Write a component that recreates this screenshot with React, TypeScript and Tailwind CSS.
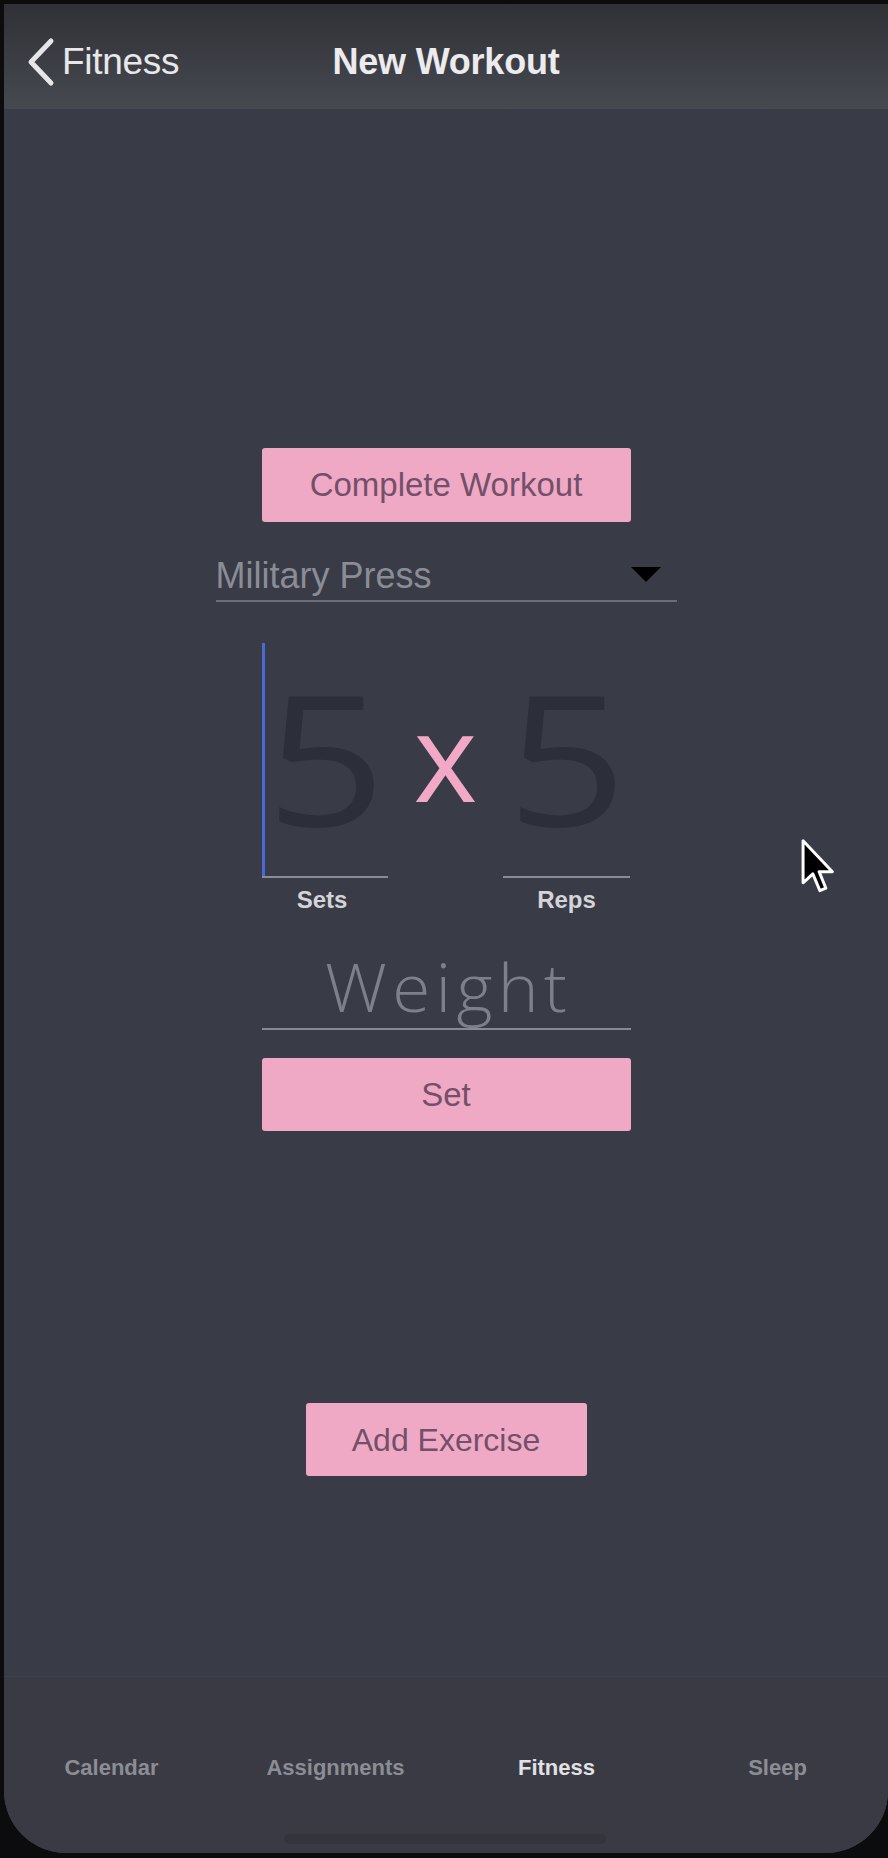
import React from "react";

const sans = { fontFamily: '"Liberation Sans", Arial, sans-serif' };
const geo = { fontFamily: '"Open Sans", "Noto Sans", sans-serif' };

function Chevron() {
  return (
    <svg width="30" height="50" viewBox="0 0 30 50" fill="none">
      <path d="M26 4 L6 25 L26 46" stroke="#e6e6e9" strokeWidth="5" strokeLinecap="round" strokeLinejoin="round" />
    </svg>
  );
}

function Cursor() {
  return (
    <svg width="36" height="57" viewBox="0 0 13 21" className="absolute left-[800px] top-[838px]">
      <path d="M1 1 L1 16.5 L4.6 13.2 L7.2 19.4 L9.4 18.5 L6.9 12.4 L11.8 12.4 Z" fill="#000" stroke="#fff" strokeWidth="1.1" strokeLinejoin="round" />
    </svg>
  );
}

export default function App() {
  return (
    <div className="relative w-[888px] h-[1858px] bg-[#0c0c0e] overflow-hidden" style={sans}>
      <div className="absolute left-[4px] top-[4px] w-[884px] h-[1849px] rounded-b-[62px] bg-[#393b47] flex flex-col overflow-hidden">
        {/* Header */}
        <div className="h-[105px] shrink-0 bg-gradient-to-b from-[#2f3137] to-[#474950] grid grid-cols-[1fr_auto_1fr] items-center">
          <div className="flex items-center pl-[21px] gap-[7px] mt-[10px]">
            <Chevron />
            <span className="text-[37px] text-[#e8e8ea] tracking-[-0.3px]">Fitness</span>
          </div>
          <div className="text-[36px] font-bold text-[#ececee] mt-[10px] tracking-[-0.2px]">New Workout</div>
          <div />
        </div>

        {/* Main */}
        <div className="flex flex-col items-center">
          <button className="mt-[339px] w-[369px] h-[74px] rounded-[3px] bg-[#f0a9c4] text-[#73506a] text-[33px]">
            Complete Workout
          </button>

          <div className="mt-[28px] w-[461px] h-[52px] border-b-2 border-[#6c6e77] flex items-center justify-between">
            <span className="text-[36px] text-[#8b8d96] mt-[2px]">Military Press</span>
            <svg width="30" height="16" viewBox="0 0 30 16" className="mr-[16px]">
              <path d="M0 0 L30 0 L15 15 Z" fill="#000" />
            </svg>
          </div>

          <div className="mt-[41px] w-[368px] flex items-end justify-between" style={geo}>
            <div className="relative w-[126px] h-[235px] border-b-2 border-[#8a8c95] flex items-end justify-center pb-[29px]">
              <div className="absolute left-0 top-0 bottom-0 w-[3px] bg-[#4a69d6]" />
              <span className="text-[181px] font-medium leading-none text-[#2c2e3a] ml-[2px] scale-x-[1.16]">5</span>
            </div>
            <div className="h-[235px] flex items-center">
              <span className="text-[122px] leading-none text-[#f2a9c8] -mt-[12px]">x</span>
            </div>
            <div className="w-[127px] h-[235px] border-b-2 border-[#8a8c95] flex items-end justify-center pb-[29px]">
              <span className="text-[181px] font-medium leading-none text-[#2c2e3a] scale-x-[1.16]">5</span>
            </div>
          </div>

          <div className="mt-[8px] w-[368px] flex justify-between text-[24px] leading-[28px] font-bold text-[#d4d4d8]">
            <span className="w-[126px] text-center pr-[6px]">Sets</span>
            <span className="w-[127px] text-center">Reps</span>
          </div>

          <div className="mt-[30px] w-[369px] h-[86px] border-b-2 border-[#888a93] flex items-center justify-center" style={geo}>
            <span className="text-[66px] font-light text-[#7d8089] tracking-[5px] leading-none -mr-[5px] scale-x-[1.05]">Weight</span>
          </div>

          <button className="mt-[28px] w-[369px] h-[73px] rounded-[3px] bg-[#f0a9c4] text-[#73506a] text-[33px]">
            Set
          </button>

          <button className="mt-[272px] w-[281px] h-[73px] rounded-[3px] bg-[#f0a9c4] text-[#73506a] text-[32px]">
            Add Exercise
          </button>
        </div>

        {/* Tab bar */}
        <div className="mt-auto h-[177px] shrink-0 bg-[#393a44] border-t border-[#3f414c] relative">
          <div className="grid grid-cols-4 pt-[74px]">
            <span className="text-center text-[22px] font-bold text-[#8c8d94] pr-[6px]">Calendar</span>
            <span className="text-center text-[22px] font-bold text-[#8c8d94]">Assignments</span>
            <span className="text-center text-[22px] font-bold text-[#e2e2e6]">Fitness</span>
            <span className="text-center text-[22px] font-bold text-[#8c8d94]">Sleep</span>
          </div>
          <div className="absolute left-[280px] top-[157px] w-[322px] h-[10px] rounded-full bg-[#34353b]" />
        </div>
      </div>
      <Cursor />
    </div>
  );
}
